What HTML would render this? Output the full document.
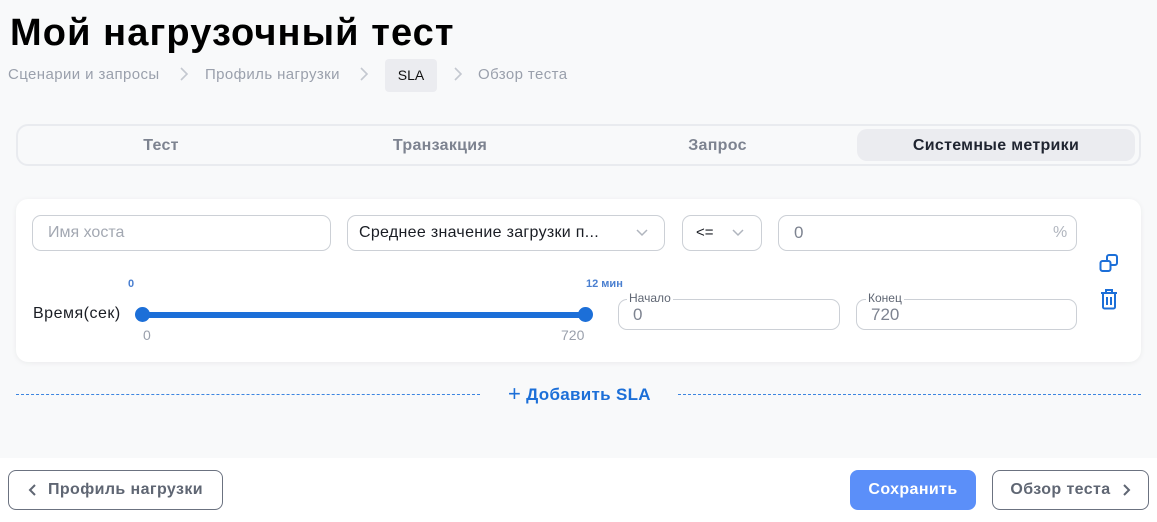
<!DOCTYPE html>
<html><head><meta charset="utf-8"><style>
*{box-sizing:border-box;margin:0;padding:0}
body{width:1157px;height:522px;overflow:hidden;background:#f8f9fa;font-family:"Liberation Sans",sans-serif;position:relative}
.a{position:absolute;white-space:nowrap}
h1{position:absolute;left:10px;top:12px;font-size:38px;font-weight:bold;color:#000;letter-spacing:1.1px}
.bc{font-size:15px;color:#9aa0ac;top:66px;letter-spacing:0.4px}
.chev{top:66px;width:10px;height:16px}
.tabs{left:16px;top:124px;width:1125px;height:42px;border:2px solid #e9ebef;border-radius:12px}
.tab{top:137px;font-size:16px;font-weight:bold;color:#7d8390;text-align:center;letter-spacing:0.3px}
.card{left:16px;top:199px;width:1125px;height:163px;background:#fff;border-radius:12px;box-shadow:0 1px 6px rgba(0,0,0,.06)}
.inp{border:1px solid #ccd0d6;border-radius:9px;background:#fff}
.dd{width:12px;height:8px}
.btn{border:1px solid #6b7280;border-radius:8px;background:#fff;font-size:16px;font-weight:bold;color:#5f6673;display:flex;align-items:center;justify-content:center;letter-spacing:0.4px}
</style></head><body>
<h1>Мой нагрузочный тест</h1>
<div class="a bc" style="left:8px">Сценарии и запросы</div>
<svg class="a chev" style="left:179px" viewBox="0 0 10 16"><path d="M2 2l6 6-6 6" fill="none" stroke="#c4c8d0" stroke-width="1.6"/></svg>
<div class="a bc" style="left:205px">Профиль нагрузки</div>
<svg class="a chev" style="left:359px" viewBox="0 0 10 16"><path d="M2 2l6 6-6 6" fill="none" stroke="#c4c8d0" stroke-width="1.6"/></svg>
<div class="a" style="left:385px;top:59px;width:52px;height:33px;background:#ebecf0;border-radius:4px;font-size:14px;color:#111;text-align:center;line-height:33px">SLA</div>
<svg class="a chev" style="left:453px" viewBox="0 0 10 16"><path d="M2 2l6 6-6 6" fill="none" stroke="#c4c8d0" stroke-width="1.6"/></svg>
<div class="a bc" style="left:478px">Обзор теста</div>

<div class="a tabs"></div>
<div class="a" style="left:857px;top:129px;width:278px;height:32px;background:#ebecf0;border-radius:10px"></div>
<div class="a tab" style="left:100px;width:122px">Тест</div>
<div class="a tab" style="left:360px;width:160px">Транзакция</div>
<div class="a tab" style="left:650px;width:135px">Запрос</div>
<div class="a tab" style="left:880px;width:232px;color:#1f2430">Системные метрики</div>

<div class="a card"></div>
<div class="a inp" style="left:32px;top:215px;width:299px;height:36px"></div>
<div class="a" style="left:48px;top:224px;font-size:16px;color:#a3a8b2">Имя хоста</div>
<div class="a inp" style="left:347px;top:215px;width:318px;height:36px"></div>
<div class="a" style="left:359px;top:224px;font-size:16px;color:#1a1d24;letter-spacing:0.3px">Среднее значение загрузки п...</div>
<svg class="a dd" style="left:636px;top:229px" viewBox="0 0 12 8"><path d="M1 1l5 5 5-5" fill="none" stroke="#b0b5be" stroke-width="1.5"/></svg>
<div class="a inp" style="left:682px;top:215px;width:80px;height:36px"></div>
<div class="a" style="left:696px;top:224px;font-size:15px;color:#1a1d24">&lt;=</div>
<svg class="a dd" style="left:732px;top:229px" viewBox="0 0 12 8"><path d="M1 1l5 5 5-5" fill="none" stroke="#b0b5be" stroke-width="1.5"/></svg>
<div class="a inp" style="left:778px;top:215px;width:299px;height:36px"></div>
<div class="a" style="left:794px;top:223px;font-size:17px;color:#7d8390">0</div>
<div class="a" style="left:1053px;top:224px;font-size:16px;color:#b0b5be">%</div>

<div class="a" style="left:128px;top:278px;font-size:11px;font-weight:bold;color:#4a7fd0">0</div>
<div class="a" style="left:586px;top:278px;font-size:11px;font-weight:bold;color:#4a7fd0">12 мин</div>
<div class="a" style="left:33px;top:305px;font-size:16px;color:#1a1d24;letter-spacing:0.5px">Время(сек)</div>
<div class="a" style="left:142px;top:312px;width:444px;height:6px;background:#1c6fd8;border-radius:3px"></div>
<div class="a" style="left:135px;top:307px;width:15px;height:15px;background:#1c6fd8;border-radius:50%"></div>
<div class="a" style="left:578px;top:307px;width:15px;height:15px;background:#1c6fd8;border-radius:50%"></div>
<div class="a" style="left:143px;top:327px;font-size:14px;color:#9aa0ac">0</div>
<div class="a" style="left:561px;top:327px;font-size:14px;color:#9aa0ac">720</div>

<div class="a inp" style="left:618px;top:299px;width:222px;height:31px"></div>
<div class="a" style="left:627px;top:291px;font-size:12px;color:#5f6673;background:#fff;padding:0 2px">Начало</div>
<div class="a" style="left:633px;top:305px;font-size:17px;color:#7d8390">0</div>
<div class="a inp" style="left:856px;top:299px;width:221px;height:31px"></div>
<div class="a" style="left:866px;top:291px;font-size:12px;color:#5f6673;background:#fff;padding:0 2px">Конец</div>
<div class="a" style="left:871px;top:305px;font-size:17px;color:#7d8390">720</div>

<svg class="a" style="left:1099px;top:253px" width="20" height="20" viewBox="0 0 20 20"><rect x="1.5" y="8" width="10" height="10" rx="2" fill="none" stroke="#1c6fd8" stroke-width="2"/><path d="M8 8V4a2 2 0 0 1 2-2h6a2 2 0 0 1 2 2v6a2 2 0 0 1-2 2h-4" fill="none" stroke="#1c6fd8" stroke-width="2"/></svg>
<svg class="a" style="left:1099px;top:288px" width="20" height="22" viewBox="0 0 20 22"><path d="M2 5h16M7 5V2h6v3M4 5v14a1.5 1.5 0 0 0 1.5 1.5h9A1.5 1.5 0 0 0 16 19V5M8 9v8M12 9v8" fill="none" stroke="#1c6fd8" stroke-width="2"/></svg>

<div class="a" style="left:16px;top:394px;width:464px;border-top:1px dashed #3d85e0"></div>
<div class="a" style="left:678px;top:394px;width:463px;border-top:1px dashed #3d85e0"></div>
<div class="a" style="left:508px;top:380px;font-size:17px;font-weight:bold;color:#1c6fd8;letter-spacing:0.3px"><span style="font-size:22px;font-weight:normal;position:relative;top:1px">+</span> Добавить SLA</div>

<div class="a" style="left:0;top:458px;width:1157px;height:64px;background:#fff"></div>
<div class="a btn" style="left:8px;top:470px;width:215px;height:40px"><svg width="10" height="14" viewBox="0 0 10 14" style="margin-right:10px"><path d="M7 2L2 7l5 5" fill="none" stroke="#5f6673" stroke-width="2"/></svg>Профиль нагрузки</div>
<div class="a btn" style="left:850px;top:470px;width:126px;height:40px;background:#5b8ff9;border-color:#5b8ff9;color:#fff">Сохранить</div>
<div class="a btn" style="left:992px;top:470px;width:157px;height:40px">Обзор теста<svg width="10" height="14" viewBox="0 0 10 14" style="margin-left:10px"><path d="M3 2l5 5-5 5" fill="none" stroke="#5f6673" stroke-width="2"/></svg></div>
</body></html>
